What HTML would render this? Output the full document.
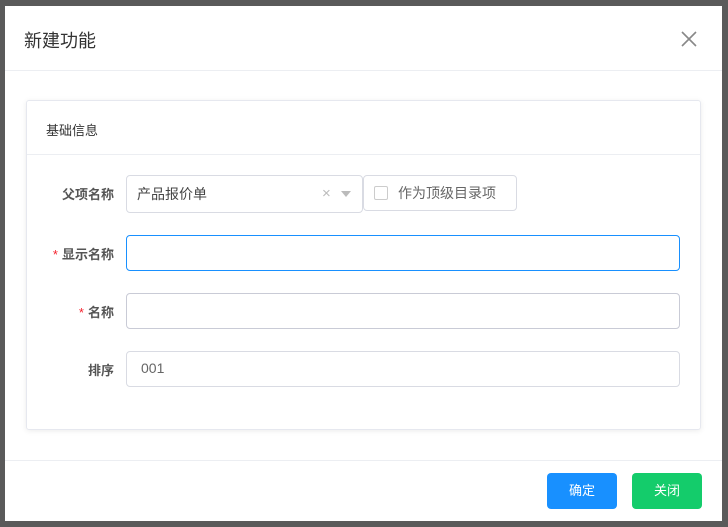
<!DOCTYPE html><html><head><meta charset="utf-8"><style>
*{box-sizing:border-box;margin:0;padding:0}
body{width:728px;height:527px;background:#5a5a5a;position:relative;overflow:hidden;font-family:"Liberation Sans","Noto Sans CJK SC",sans-serif;}
.m{position:absolute;left:5px;top:6px;width:717px;height:515px;background:#fff}
.t{position:absolute;left:19px;top:21px;font-size:18px;color:#333}
.x{position:absolute;left:675px;top:24px}
.hl{position:absolute;left:0;right:0;height:1px;background:#eceef2}
.card{position:absolute;left:21px;top:94px;width:675px;height:330px;border:1px solid #e6e8ef;border-radius:3px;box-shadow:0 1px 6px rgba(0,0,0,.08)}
.ct{position:absolute;left:19px;top:19px;font-size:13px;color:#333}
.lab{position:absolute;width:87px;text-align:right;font-size:13px;font-weight:bold;color:#555}
.lab i{color:#f5222d;font-style:normal;font-weight:normal;margin-right:4px}
.in{position:absolute;left:99px;width:554px;height:36px;border:1px solid #d9dbe3;border-radius:4px;font-size:14px;color:#666;padding:8px 14px}
.btn{position:absolute;top:467px;width:70px;height:36px;border-radius:4px;color:#fff;font-size:13px;text-align:center;line-height:36px}
</style></head><body>
<div class="m">
<div class="t">新建功能</div>
<svg class="x" width="18" height="18" viewBox="0 0 18 18"><path d="M2 2L16 16M16 2L2 16" stroke="#888" stroke-width="1.6"/></svg>
<div class="hl" style="top:64px"></div>
<div class="card">
<div class="ct">基础信息</div>
<div class="hl" style="top:53px"></div>
<div class="lab" style="top:83px">父项名称</div>
<div class="in" style="top:74px;width:237px;height:38px;color:#444;font-size:14px;padding:8px 10px">产品报价单
<span style="position:absolute;left:195px;top:9px;color:#bbb;font-size:15px">×</span>
<span style="position:absolute;left:214px;top:15px;width:0;height:0;border:5px solid transparent;border-top:6px solid #bbb"></span></div>
<div class="in" style="top:74px;left:336px;width:154px;height:36px;font-size:14px;padding:7px 10px"><span style="display:inline-block;width:14px;height:14px;border:1px solid #ccc;border-radius:2px;vertical-align:-2px;margin-right:10px"></span>作为顶级目录项</div>
<div class="lab" style="top:143px"><i>*</i>显示名称</div>
<div class="in" style="top:134px;border-color:#1890ff"></div>
<div class="lab" style="top:201px"><i>*</i>名称</div>
<div class="in" style="top:192px;border-color:#c9cbd6"></div>
<div class="lab" style="top:259px">排序</div>
<div class="in" style="top:250px">001</div>
</div>
<div class="hl" style="top:454px"></div>
<div class="btn" style="left:542px;background:#1890ff">确定</div>
<div class="btn" style="left:627px;background:#14cc6b">关闭</div>
</div>
</body></html>
